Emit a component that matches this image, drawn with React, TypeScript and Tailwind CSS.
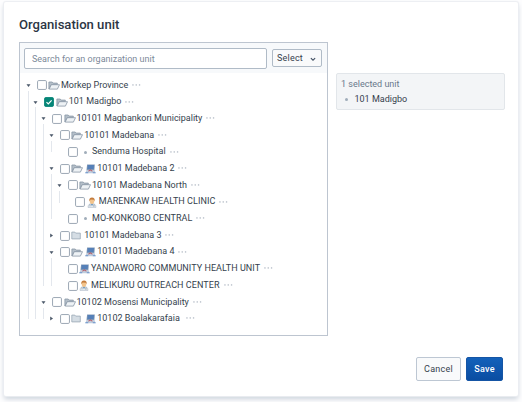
import React from "react";

type Mark = "monitor" | "doctor";
type Unit = {
  name: string;
  checked?: boolean;
  mark?: Mark;
  collapsed?: boolean;
  trailing?: boolean;
  children?: Unit[];
};

const tree: Unit = {
  name: "Morkep Province",
  children: [
    {
      name: "101 Madigbo",
      checked: true,
      children: [
        {
          name: "10101 Magbankori Municipality",
          children: [
            { name: "10101 Madebana", children: [{ name: "Senduma Hospital" }] },
            {
              name: "10101 Madebana 2",
              mark: "monitor",
              children: [
                {
                  name: "10101 Madebana North",
                  children: [{ name: "MARENKAW HEALTH CLINIC", mark: "doctor" }],
                },
                { name: "MO-KONKOBO CENTRAL" },
              ],
            },
            { name: "10101 Madebana 3", collapsed: true },
            {
              name: "10101 Madebana 4",
              mark: "monitor",
              children: [
                { name: "YANDAWORO COMMUNITY HEALTH UNIT", mark: "monitor" },
                { name: "MELIKURU OUTREACH CENTER", mark: "doctor" },
              ],
            },
          ],
        },
        {
          name: "10102 Mosensi Municipality",
          children: [
            { name: "10102 Boalakarafaia", mark: "monitor", collapsed: true, trailing: true },
          ],
        },
      ],
    },
  ],
};

function Arrow({ open }: { open: boolean }) {
  return (
    <svg className="h-[5px] w-[5px] shrink-0" viewBox="0 0 5 5" fill="#4a5768">
      <path d={open ? "M0.5 1.2h4L2.5 4z" : "M1.2 0.5v4L4 2.5z"} />
    </svg>
  );
}

function OpenFolder() {
  return (
    <svg className="h-[9px] w-[12px] shrink-0" viewBox="0 0 12 9" fill="none">
      <path d="M.9 7.9V1h3.3l1 1.1h4.1v1.5H3.3z" fill="#b4bfc9" stroke="#8997a6" strokeWidth=".8" strokeLinejoin="round" />
      <path d="M3.3 3.7h8.2L9.4 8.1H1.2z" fill="#eef2f5" stroke="#8997a6" strokeWidth=".8" strokeLinejoin="round" />
    </svg>
  );
}

function ClosedFolder() {
  return (
    <svg className="h-[9px] w-[12px] shrink-0" viewBox="0 0 12 9">
      <path d="M.8 7.9V1.1h3l.9 1h4.6v5.8z" fill="#d5dde4" stroke="#9ba8b5" strokeWidth=".8" strokeLinejoin="round" />
    </svg>
  );
}

function Monitor() {
  return (
    <svg className="h-[10px] w-[11px] shrink-0" viewBox="0 0 11 10">
      <path d="M2.1.4h7.7l-.4 5.7H1.5z" fill="#8098b5" />
      <path d="M2.8 1.1h6.2l-.3 4H2.3z" fill="#5580b8" />
      <path d="M1.5 6.1h8l1.2 3.2H.3z" fill="#c0cddd" />
      <path d="M3 6.9l2.3-1.7 2.5 1.7-.8.5-1.7-.8-1.6.8z" fill="#b65a64" />
      <path d="M.6 8.1h2.6v1.2H.3zM7.8 8.1h2.5l.4 1.2H7.8z" fill="#7da0d0" />
    </svg>
  );
}

function Doctor() {
  return (
    <svg className="h-[11px] w-[10px] shrink-0" viewBox="0 0 10 11">
      <path d="M1 10.4c0-2.5 1.1-3.8 4-3.8s4 1.3 4 3.8z" fill="#e6ecf2" stroke="#9facba" strokeWidth=".5" />
      <path d="M3.8 6.4h2.4L5.8 8 5 9l-.8-1z" fill="#729bc1" />
      <ellipse cx="5" cy="4.1" rx="2.3" ry="2.8" fill="#f3c48c" />
      <path d="M2.4 4.2C1.9 1.6 3 .4 5 .4s3.1 1.2 2.6 3.8L6.8 2.8 3.7 2.5z" fill="#c47c3c" />
      <path d="M3 7.2v2.1M7 7.2v1.5" stroke="#78899b" strokeWidth=".6" />
      <circle cx="6.9" cy="9" r=".7" fill="#9ba8b5" />
    </svg>
  );
}

function Dots() {
  return (
    <svg className="ml-[4px] h-[3px] w-[9px] shrink-0" viewBox="0 0 9 3" fill="#a3adb9">
      <rect x=".3" y=".4" width="1.3" height="1.1" />
      <rect x="3.6" y=".4" width="1.3" height="1.1" />
      <rect x="6.9" y=".4" width="1.3" height="1.1" />
    </svg>
  );
}

function Checkbox({ checked }: { checked?: boolean }) {
  return (
    <svg className="h-[10px] w-[10px] shrink-0" viewBox="0 0 10 10">
      <rect x=".55" y=".55" width="8.9" height="8.9" rx="1.2" fill={checked ? "#078678" : "#fff"} stroke={checked ? "#078678" : "#929ead"} strokeWidth=".9" />
      {checked && <path d="M2.5 5.1l1.8 1.8 3.3-3.6" fill="none" stroke="#fff" strokeWidth="1.2" />}
    </svg>
  );
}

function UnitNode({ unit }: { unit: Unit }) {
  const branch = Boolean(unit.children) || Boolean(unit.collapsed);
  const upper = unit.name === unit.name.toUpperCase();
  return (
    <li>
      <div className="flex h-[16.7px] items-center whitespace-nowrap">
        <span className="flex w-[11px] shrink-0">{branch && <Arrow open={!unit.collapsed} />}</span>
        <Checkbox checked={unit.checked} />
        <span className="ml-[1.5px] flex h-[11px] items-center">
          {branch && (unit.collapsed ? <ClosedFolder /> : <OpenFolder />)}
          {!branch && !unit.mark && <span className="mr-[4px] ml-[5px] h-[3px] w-[3px] rounded-full bg-[#a0adba]" />}
          {unit.mark && (
            <span className={branch ? "ml-[2px] flex" : "flex"}>
              {unit.mark === "monitor" ? <Monitor /> : <Doctor />}
            </span>
          )}
        </span>
        <span className={`${unit.mark === "doctor" ? "ml-[2px]" : "ml-[1px]"} ${upper ? "tracking-[0.06px]" : ""}`}>
          {unit.name}
        </span>
        {unit.trailing && <span className="w-[2px]" />}
        <Dots />
      </div>
      {unit.children && (
        <div className="flex">
          <div className="w-[7.75px] shrink-0 pb-[8px] pl-[2px]">
            <div className="-mt-[3px] h-[calc(100%+3px)] w-px bg-[#e3e7ed]" />
          </div>
          <ul>
            {unit.children.map((child) => <UnitNode key={child.name} unit={child} />)}
          </ul>
        </div>
      )}
    </li>
  );
}

export default function App() {
  return (
    <main className="h-[402px] w-[522px] bg-[#fdfdfe] pt-[2px] pl-[4px] font-[Roboto,sans-serif] text-[#353f4d]">
      <section className="flex h-[394px] w-[514px] flex-col rounded-[2px] bg-white pt-[14px] pr-[13px] pb-[15px] pl-[15px] shadow-[0_0_1px_1px_#eceef2,0_3px_5px_#cad1da]">
        <h1 className="h-[26px] text-[13.1px] leading-[18px] font-medium text-[#2c3644]">Organisation unit</h1>
        <div className="flex items-start">
          <div className="h-[294px] w-[309px] shrink-0 border border-[#bdc5d0] bg-white">
            <div className="flex h-[30px] items-center bg-[#f7f9fb] pl-[4px]">
              <input className="h-[21px] w-[243px] rounded-[2px] border border-[#b0bbc7] bg-white px-[7px] pt-[2px] text-[9px] placeholder:text-[#7c8999]" placeholder="Search for an organization unit" />
              <button className="ml-[5px] flex h-[18px] w-[50px] items-center rounded-[2px] border border-[#b0bbc7] bg-[#f9fafb] pt-[2px] pl-[4px] text-[9px] tracking-[0.2px]">
                Select
                <svg className="ml-[7px] h-[5px] w-[6px]" viewBox="0 0 7 5" fill="none" stroke="#435164" strokeWidth="1.3"><path d="M1 1l2.5 2.4L6 1" /></svg>
              </button>
            </div>
            <ul className="pt-[4px] pl-[5.5px] text-[9px]">
              <UnitNode unit={tree} />
            </ul>
          </div>
          <aside className="mt-[31px] ml-[8px] h-[37px] w-[169px] rounded-[2px] border border-[#e2e6ea] bg-[#f3f5f7] pt-[4px] pl-[4px] text-[9px]">
            <p className="leading-[13px] text-[#69788b]">1 selected unit</p>
            <div className="mt-[2px] flex items-center leading-[13px]">
              <span className="mr-[6.5px] ml-[4px] h-[3px] w-[3px] rounded-full bg-[#a0adba]" />
              101 Madigbo
            </div>
          </aside>
        </div>
        <footer className="mt-auto mr-[2px] flex justify-end gap-[5px] text-[9px] tracking-[0.25px]">
          <button className="h-[24px] w-[45px] rounded-[2px] border border-[#bdc7d3] bg-[#f9fafb] pt-[2px]">Cancel</button>
          <button className="h-[24px] w-[37px] rounded-[2px] border border-[#1555a5] bg-linear-to-b from-[#1461ba] to-[#0a4da2] pt-[2px] font-medium text-white">Save</button>
        </footer>
      </section>
    </main>
  );
}
